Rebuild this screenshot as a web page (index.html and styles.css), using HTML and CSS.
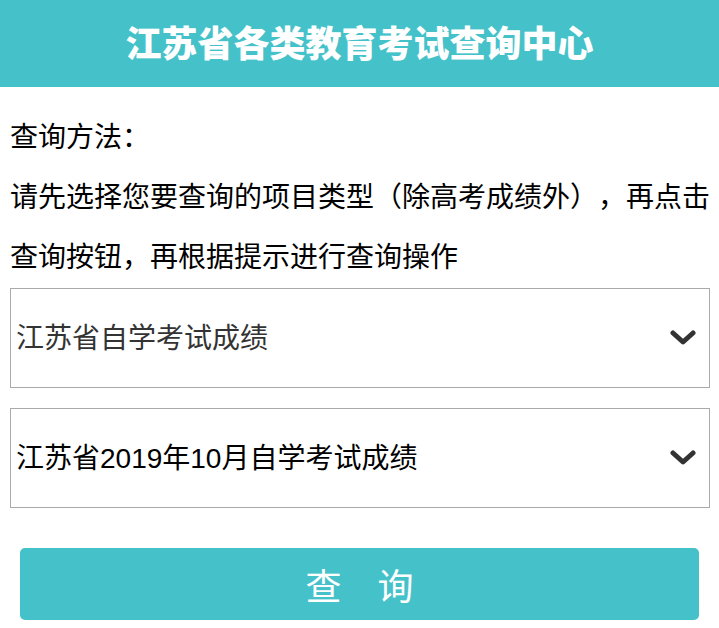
FILE: index.html
```html
<!DOCTYPE html>
<html lang="zh-CN">
<head>
    <meta charset="UTF-8">
    <meta name="viewport" content="width=device-width, initial-scale=1.0">
    <title>江苏省各类教育考试查询中心</title>
    <link rel="stylesheet" href="styles.css">
</head>
<body>

<div class="header">江苏省各类教育考试查询中心</div>

<div class="container">
    <p class="tip">查询方法<span class="punct">：</span></p>
    <p class="tip">请先选择您要查询的项目类型<span class="punct">（</span>除高考成绩外<span class="punct">），</span>再点击查询按钮<span class="punct">，</span>再根据提示进行查询操作</p>

    <div class="select-wrap">
        <select class="select first">
            <option>江苏省自学考试成绩</option>
        </select>
        <svg class="arrow" viewBox="0 0 26 16"><polyline points="3,3 13,12 23,3" /></svg>
    </div>

    <div class="select-wrap">
        <select class="select">
            <option>江苏省2019年10月自学考试成绩</option>
        </select>
        <svg class="arrow" viewBox="0 0 26 16"><polyline points="3,3 13,12 23,3" /></svg>
    </div>

    <button type="button" class="button">查　询</button>
</div>

</body>
</html>
```

FILE: styles.css
```css
body {
    font-family: "Liberation Sans", "Noto Sans CJK SC", sans-serif;
    background-color: #fff;
    margin: 0;
    padding: 0;
    text-spacing-trim: space-all;
}

.header {
    background-color: #45c2c9;
    color: #fff;
    height: 87px;
    line-height: 89px;
    text-align: center;
    font-size: 36px;
    font-weight: 900;
}

.container {
    padding: 21px 8px 0 10px;
}

.tip {
    margin: 0;
    font-size: 28px;
    line-height: 60px;
    color: #000;
}

.punct {
    font-family: "Noto Sans CJK TC", sans-serif;
    line-height: 1;
}

.select-wrap {
    position: relative;
    margin-right: 1px;
    margin-bottom: 20px;
}

.select {
    display: block;
    width: 100%;
    height: 100px;
    box-sizing: border-box;
    border: 1px solid #aaa;
    background: #fff;
    padding: 0 0 0 5px;
    font-family: "Liberation Sans", "Noto Sans CJK SC", sans-serif;
    font-size: 28px;
    color: #000;
    appearance: none;
    -webkit-appearance: none;
    border-radius: 0;
}

.select.first {
    color: #333;
}

.arrow {
    position: absolute;
    right: 14px;
    top: 42px;
    width: 26px;
    height: 16px;
    fill: none;
    stroke: #333;
    stroke-width: 5;
    stroke-linecap: round;
    stroke-linejoin: round;
}

.button {
    display: block;
    width: 679px;
    height: 72px;
    margin: 40px 0 0 10px;
    background-color: #45c2c9;
    color: #fff;
    border: none;
    border-radius: 5px;
    font-family: "Liberation Sans", "Noto Sans CJK SC", sans-serif;
    font-size: 36px;
    cursor: pointer;
}
```
